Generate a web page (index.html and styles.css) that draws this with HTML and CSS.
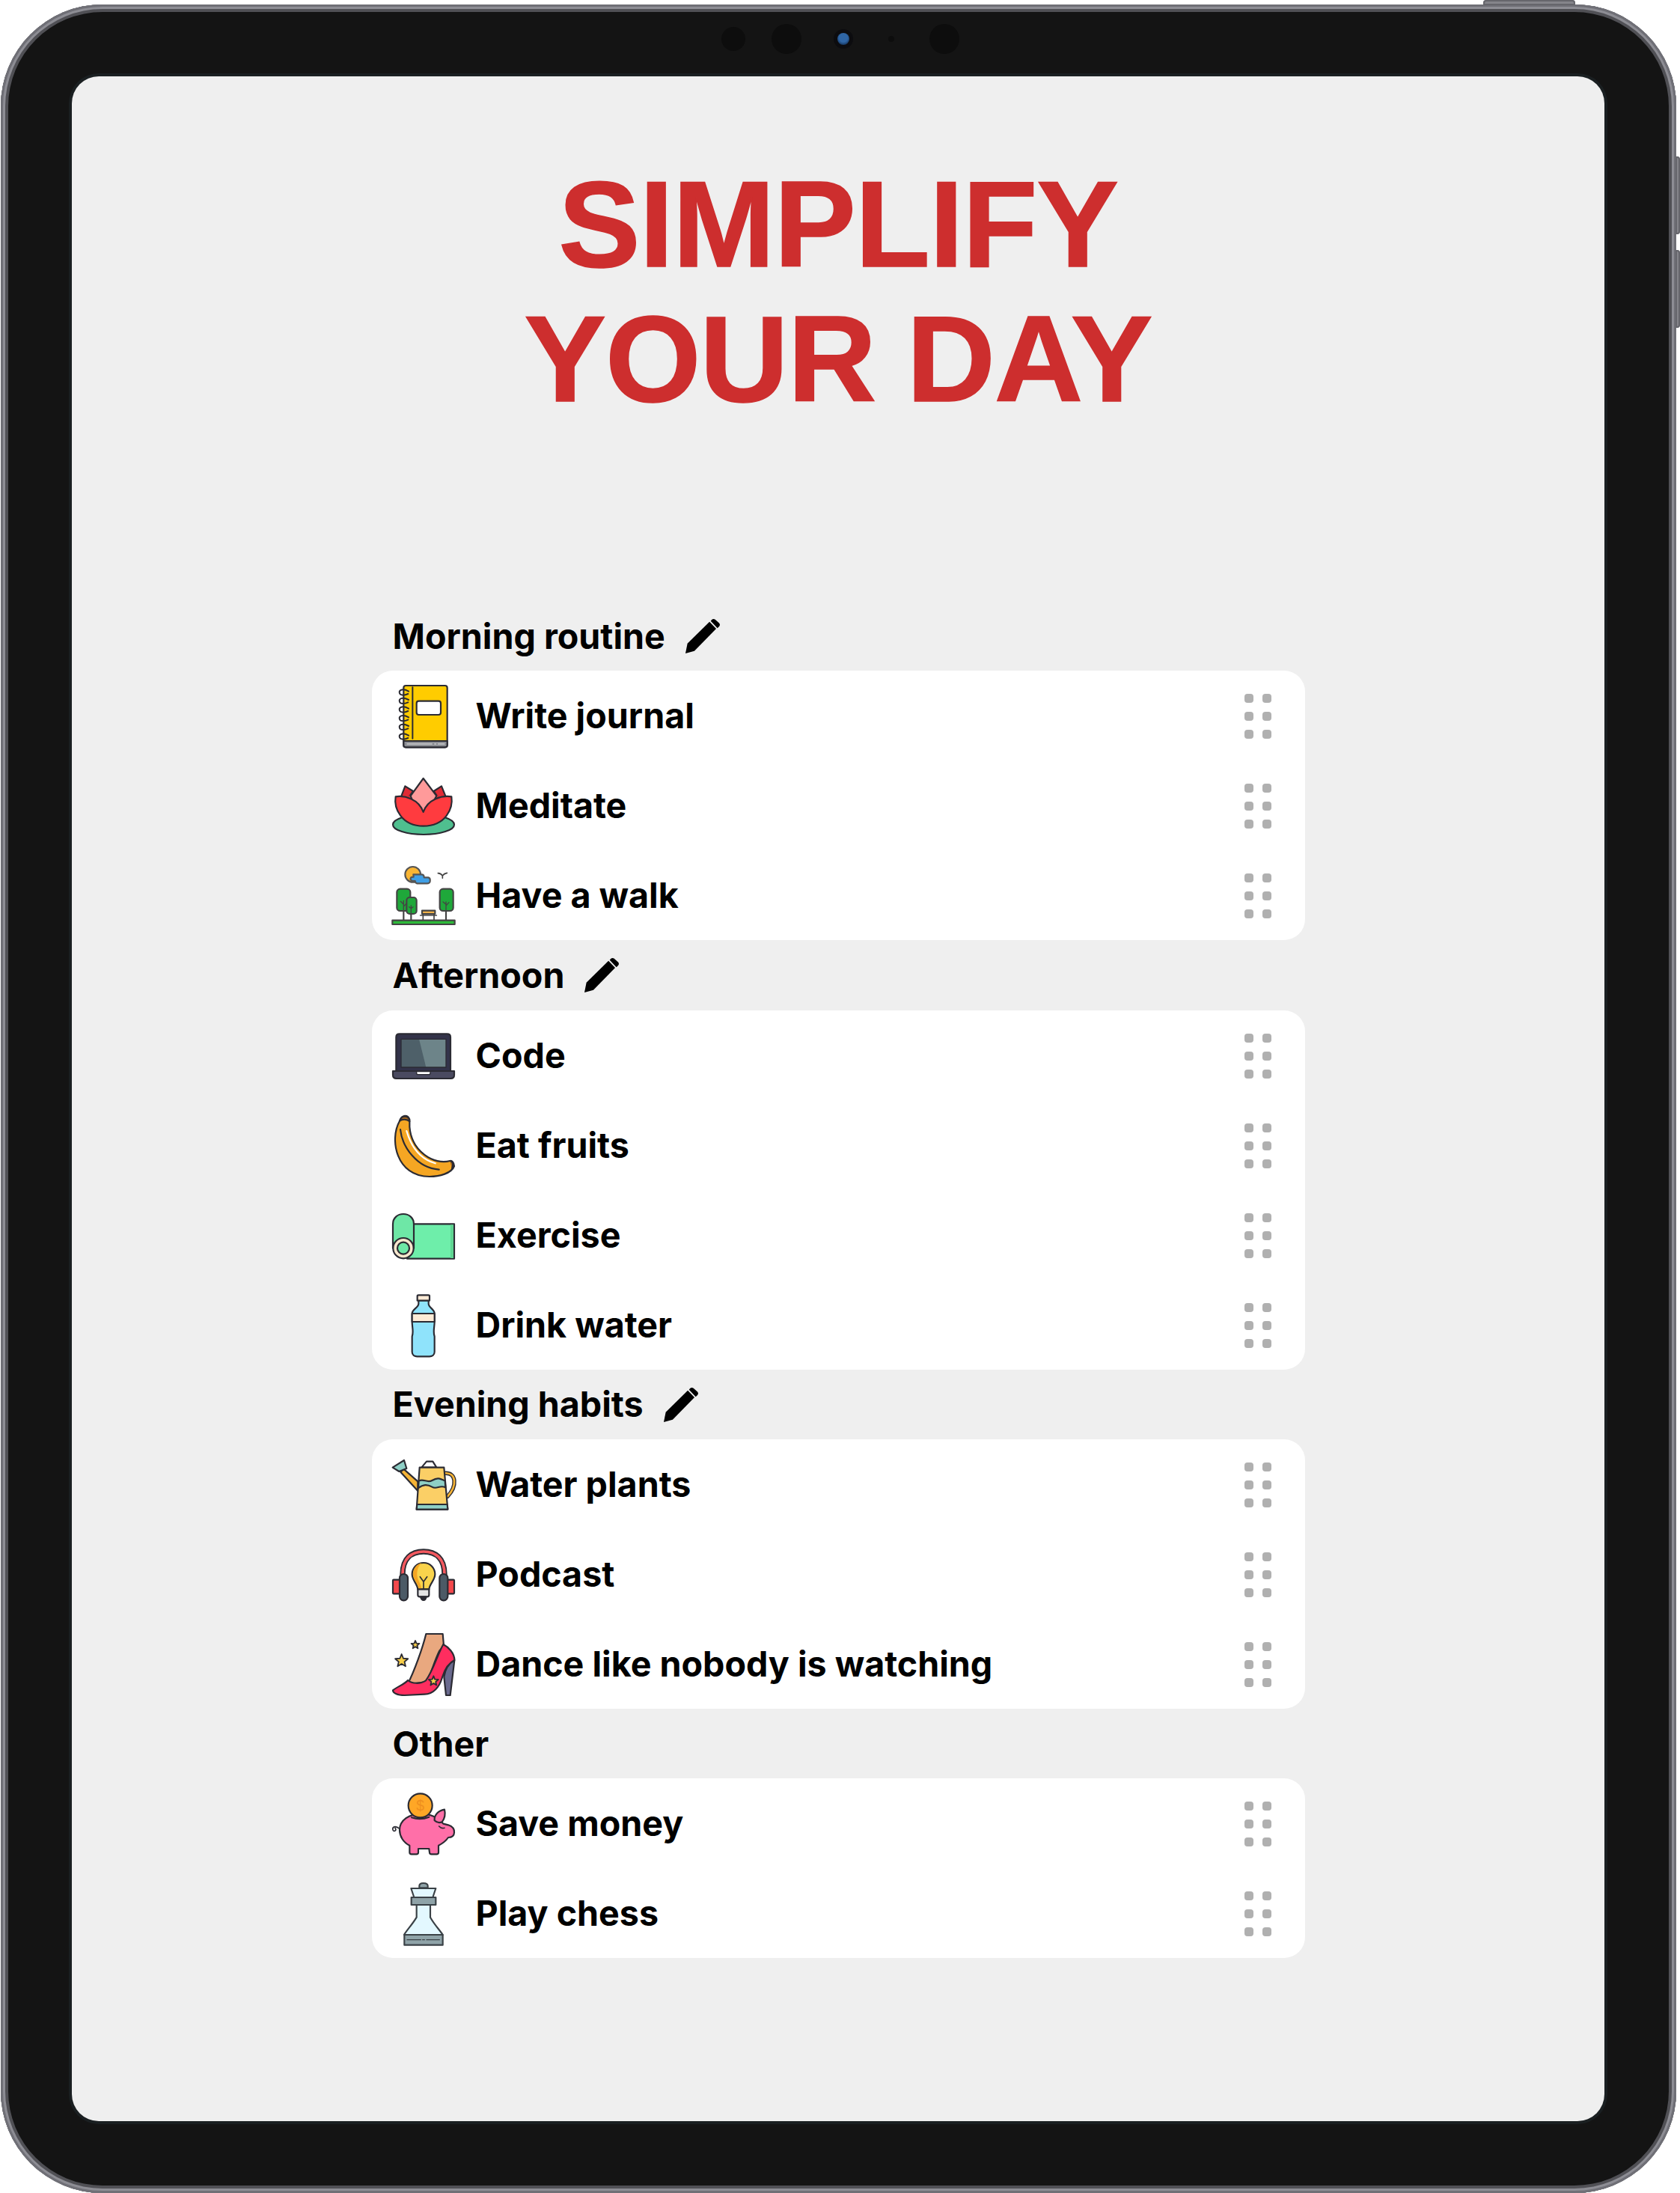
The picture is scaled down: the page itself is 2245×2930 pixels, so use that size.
FILE: index.html
```html
<!DOCTYPE html>
<html lang="en">
<head>
<meta charset="utf-8">
<title>Simplify your day</title>
<link rel="stylesheet" href="styles.css">
</head>
<body>
<svg class="defs" aria-hidden="true"><defs>
<polygon id="star" points="0,-1 .26,-.36 .95,-.31 .43,.14 .59,.81 0,.45 -.59,.81 -.43,.14 -.95,-.31 -.26,-.36"/>
<g id="pencil"><path d="M8 102 97 14 124 42 36 132 0 142Z"/><path d="M106 6Q113 0 120 5L136 20Q142 27 136 33L129 40 102 11Z"/></g>
<g id="grip"><rect x="0" y="0" width="12" height="12" rx="4"/><rect x="24" y="0" width="12" height="12" rx="4"/><rect x="0" y="24" width="12" height="12" rx="4"/><rect x="24" y="24" width="12" height="12" rx="4"/><rect x="0" y="48" width="12" height="12" rx="4"/><rect x="24" y="48" width="12" height="12" rx="4"/></g>
</defs></svg>
<div class="device">
  <span class="btn btn-top"></span>
  <span class="btn btn-side btn-a"></span>
  <span class="btn btn-side btn-b"></span>
  <span class="sensor s1"></span>
  <span class="sensor s2"></span>
  <span class="sensor lens"></span>
  <span class="sensor s4"></span>
  <span class="sensor s5"></span>
  <main class="screen">
    <h1 class="title">SIMPLIFY<br>YOUR DAY</h1>
    <div class="groups">

      <h2 class="group-title">Morning routine <svg class="pen" viewBox="0 0 142 142"><use href="#pencil"/></svg></h2>
      <ul class="card">
        <li class="row">
          <svg class="ic" viewBox="0 0 252 252">
            <rect x="46" y="3" width="175" height="247" rx="9" fill="#ffcc00"/>
            <path d="M46 225H221V242Q221 250 212 250H55Q46 250 46 242Z" fill="#8d8f94"/>
            <path d="M60 237H160M170 237H176M184 237H210" stroke-width="3" stroke="#e8e8e8"/>
            <path d="M82 10V215" stroke-width="6"/>
            <rect x="98" y="65" width="97" height="55" rx="9" fill="#fff"/>
            <g fill="none" stroke-width="6"><path d="M66 26C40 12 26 22 30 34 33 44 52 42 64 36"/><path d="M66 60C40 46 26 56 30 68 33 78 52 76 64 70"/><path d="M66 95C40 81 26 91 30 103 33 113 52 111 64 105"/><path d="M66 130C40 116 26 126 30 138 33 148 52 146 64 140"/><path d="M66 165C40 151 26 161 30 173 33 183 52 181 64 175"/><path d="M66 203C40 189 26 199 30 211 33 221 52 219 64 213"/></g>
          </svg>
          <span class="label">Write journal</span>
          <svg class="grip" viewBox="0 0 36 60"><use href="#grip"/></svg>
        </li>
        <li class="row">
          <svg class="ic" viewBox="0 0 252 252">
            <ellipse cx="126" cy="200" rx="123" ry="40" fill="#4fbf8f"/>
            <path d="M36 88 52 46 84 66 60 100Z" fill="#e02b35"/>
            <path d="M215 88 198 46 167 66 190 100Z" fill="#e02b35"/>
            <path d="M50 95 80 78H172L205 95 125 160Z" fill="#e02b35" stroke="none"/>
            <path d="M125 15 74 85 80 100 125 150 170 100 178 85Z" fill="#ff9a9a"/>
            <path d="M14 88C50 82 108 98 125 150 142 98 200 82 238 88 245 135 215 206 125 206 38 206 6 135 14 88Z" fill="#ff3b3f"/>
          </svg>
          <span class="label">Meditate</span>
          <svg class="grip" viewBox="0 0 36 60"><use href="#grip"/></svg>
        </li>
        <li class="row">
          <svg class="ic" viewBox="0 0 252 252">
            <circle cx="83" cy="40" r="31" fill="#f9b533" stroke="#555"/>
            <path d="M85 40H118Q128 40 128 52H145Q154 54 152 68 150 76 140 76H100Q92 74 92 66H80Q72 62 74 55 76 50 86 50Z" fill="#3f9fe6" stroke="#555"/>
            <path d="M184 35Q196 36 202 45 208 36 220 34M202 45V55" fill="none" stroke="#444" stroke-width="5"/>
            <g stroke="#444">
            <path d="M46 185V222M76 190V222M216 185V222" fill="none"/>
            <rect x="19" y="98" width="54" height="88" rx="13" fill="#1fa83a"/>
            <rect x="58" y="132" width="40" height="66" rx="12" fill="#1fa83a"/>
            <rect x="191" y="98" width="54" height="88" rx="13" fill="#1fa83a"/>
            <path d="M46 185V145M46 160 34 148M46 168 58 156M76 198V165M76 176 68 170M76 176 84 170M216 185V150M216 160 204 150M216 165 228 152" fill="none" stroke-width="4"/>
            <path d="M120 185H172V198H120Z" fill="#f0b24a"/>
            <path d="M113 204H178M124 198V222M168 198V222" fill="none" stroke-width="5"/>
            <rect x="1" y="224" width="250" height="16" fill="#2dbb3a"/>
            </g>
          </svg>
          <span class="label">Have a walk</span>
          <svg class="grip" viewBox="0 0 36 60"><use href="#grip"/></svg>
        </li>
      </ul>

      <h2 class="group-title">Afternoon <svg class="pen" viewBox="0 0 142 142"><use href="#pencil"/></svg></h2>
      <ul class="card">
        <li class="row">
          <svg class="ic" viewBox="0 0 252 252">
            <path d="M16 186V50Q16 37 30 37H220Q234 37 234 50V186Z" fill="#33334a"/>
            <rect x="36" y="58" width="180" height="113" fill="#4e6069" stroke="none"/>
            <path d="M108 58H216V171H136Z" fill="#6d8489" stroke="none"/>
            <path d="M36 58H216V171H36Z" fill="none" stroke-width="4"/>
            <path d="M3 186H249V202Q249 216 235 216H17Q3 216 3 202Z" fill="#4a4a60"/>
            <path d="M98 188H153V194Q153 200 147 200H104Q98 200 98 194Z" fill="#fff" stroke-width="4"/>
          </svg>
          <span class="label">Code</span>
          <svg class="grip" viewBox="0 0 36 60"><use href="#grip"/></svg>
        </li>
        <li class="row">
          <svg class="ic" viewBox="0 0 252 252">
            <path d="M30 26C-12 100 16 249 150 249 190 249 238 236 249 207 248 192 240 184 232 186 170 204 78 150 70 50L70 20C62 0 40 0 30 26Z" fill="#f5a623"/>
            <path d="M30 26C40 18 60 18 70 28 70 6 40-2 30 26Z" fill="#a5661d"/>
            <path d="M232 186C246 190 246 200 240 218" fill="#a5661d"/>
            <path d="M33 60C40 130 100 215 188 221" fill="none"/>
            <path d="M58 66C75 125 110 178 173 196" fill="none" stroke="#fff"/>
          </svg>
          <span class="label">Eat fruits</span>
          <svg class="grip" viewBox="0 0 36 60"><use href="#grip"/></svg>
        </li>
        <li class="row">
          <svg class="ic" viewBox="0 0 252 252">
            <rect x="60" y="79" width="189" height="139" fill="#6eeeaa"/>
            <path d="M234 82H246V216H234Z" fill="#5fd592" stroke="none"/>
            <path d="M3 176V80C3 54 22 39 45 39 68 39 87 54 87 80V176Z" fill="#6ee7a6"/>
            <circle cx="45" cy="176" r="41" fill="#f7e7cd"/>
            <circle cx="45" cy="176" r="24" fill="#6ee7a6"/>
          </svg>
          <span class="label">Exercise</span>
          <svg class="grip" viewBox="0 0 36 60"><use href="#grip"/></svg>
        </li>
        <li class="row">
          <svg class="ic" viewBox="0 0 252 252">
            <path d="M106 26H146V38C146 55 170 60 170 78V111C170 135 163 150 170 170V232C170 245 160 250 150 250H100C90 250 80 245 80 232V170C87 150 80 135 80 111V78C80 60 106 55 106 38Z" fill="#8fe3fb"/>
            <path d="M80 78H170V111H80Z" fill="#fdebd6"/>
            <path d="M101 8Q101 4 106 4H145Q150 4 150 8V26H101Z" fill="#fdebd6"/>
          </svg>
          <span class="label">Drink water</span>
          <svg class="grip" viewBox="0 0 36 60"><use href="#grip"/></svg>
        </li>
      </ul>

      <h2 class="group-title">Evening habits <svg class="pen" viewBox="0 0 142 142"><use href="#pencil"/></svg></h2>
      <ul class="card">
        <li class="row">
          <svg class="ic" viewBox="0 0 252 252">
            <path d="M46 62 103 112V150L34 74Z" fill="#f5b335"/>
            <path d="M2 56 48 27 58 60 28 72Z" fill="#8ecfc6"/>
            <path d="M210 79C258 74 262 130 222 172" fill="none" stroke-width="16"/>
            <path d="M210 79C258 74 262 130 222 172" fill="none" stroke="#f5b335" stroke-width="8"/>
            <path d="M118 56 138 32H163L178 56Z" fill="#fff"/>
            <path d="M110 56H208L223 224H98Z" fill="#fbcf66"/>
            <path d="M107 110C125 98 140 120 160 108S190 98 212 110L214 136C190 124 180 146 160 134S125 124 105 138Z" fill="#8ecfc6"/>
            <path d="M100 204H221L223 224H98Z" fill="#8ecfc6"/>
          </svg>
          <span class="label">Water plants</span>
          <svg class="grip" viewBox="0 0 36 60"><use href="#grip"/></svg>
        </li>
        <li class="row">
          <svg class="ic" viewBox="0 0 252 252">
            <path d="M42 124C42 60 78 33 126 33 174 33 210 60 210 124" fill="none" stroke-width="22"/>
            <path d="M42 124C42 60 78 33 126 33 174 33 210 60 210 124" fill="none" stroke="#f4595f" stroke-width="11"/>
            <rect x="3" y="146" width="30" height="56" rx="3" fill="#f4484c"/>
            <rect x="219" y="146" width="30" height="56" rx="3" fill="#f4484c"/>
            <rect x="30" y="123" width="33" height="106" rx="16" fill="#4c5a66"/>
            <rect x="190" y="123" width="33" height="106" rx="16" fill="#4c5a66"/>
            <path d="M126 78C98 78 80 100 80 124 80 148 100 160 103 184H148C151 160 172 148 172 124 172 100 154 78 126 78Z" fill="#f9d34c"/>
            <path d="M118 79C98 84 84 100 84 124 84 146 104 158 107 182H118C114 158 100 146 100 124 100 104 106 90 118 79Z" fill="#f5a623" stroke="none"/>
            <path d="M126 182V154M112 134 126 154 140 134" fill="none" stroke-width="5"/>
            <path d="M103 184H148V206Q148 214 140 214H111Q103 214 103 206Z" fill="#e4e4e4"/>
            <path d="M114 214H137Q134 228 126 228 118 228 114 214Z" fill="#2b2b33"/>
          </svg>
          <span class="label">Podcast</span>
          <svg class="grip" viewBox="0 0 36 60"><use href="#grip"/></svg>
        </li>
        <li class="row">
          <svg class="ic" viewBox="0 0 252 252">
            <path d="M136 3H203L207 50 190 70C170 110 160 150 140 195L62 205C90 150 122 60 136 3Z" fill="#e9a87f"/>
            <path d="M250 108C225 122 212 148 208 175L216 249H233Z" fill="#6a6a8e"/>
            <path d="M3 229C20 215 50 205 63 189 80 203 112 205 135 190 165 150 180 90 205 45 225 55 250 80 250 108 215 125 205 165 200 180 190 215 165 245 130 245L50 249C20 249 3 240 3 229Z" fill="#ff2d5f"/>
            <use href="#star" transform="translate(93 47) scale(17)" fill="#f9cf4a" stroke-width=".33"/>
            <use href="#star" transform="translate(38 111) scale(27)" fill="#f9cf4a" stroke-width=".2"/>
            <use href="#star" transform="translate(166 192) scale(20)" fill="#f9cf4a" stroke-width=".28"/>
          </svg>
          <span class="label">Dance like nobody is watching</span>
          <svg class="grip" viewBox="0 0 36 60"><use href="#grip"/></svg>
        </li>
      </ul>

      <h2 class="group-title">Other</h2>
      <ul class="card">
        <li class="row">
          <svg class="ic" viewBox="0 0 252 252">
            <path d="M30 145C12 130 0 138 3 150 8 160 20 150 12 142" fill="none" stroke-width="5"/>
            <path d="M30 150C30 110 70 85 115 85 150 85 180 95 205 125L225 130C240 135 250 145 249 160 248 175 240 180 225 180 215 195 200 205 186 212V240Q186 247 178 247H158Q150 247 150 240L148 225H105V240Q105 247 97 247H78Q70 247 70 240V212C45 200 30 175 30 150Z" fill="#ff6fa8"/>
            <path d="M170 112C168 90 185 72 210 68 214 85 210 105 200 118 190 122 178 120 170 112Z" fill="#ff6fa8"/>
            <path d="M188 135Q198 146 210 142" fill="none" stroke-width="5"/>
            <circle cx="113" cy="52" r="48" fill="#ffa726"/>
            <text class="coin" x="113" y="72">$</text>
            <path d="M78 100Q113 112 148 98" fill="none"/>
          </svg>
          <span class="label">Save money</span>
          <svg class="grip" viewBox="0 0 36 60"><use href="#grip"/></svg>
        </li>
        <li class="row">
          <svg class="ic" viewBox="0 0 252 252">
            <g stroke="#3a4146">
            <path d="M109 22V14Q109 3 125 3 143 3 143 14V22Z" fill="#8fa3a8"/>
            <path d="M76 24H175L163 60H88Z" fill="#e3f8ff"/>
            <rect x="77" y="60" width="98" height="30" fill="#8fa3a8"/>
            <path d="M98 90H153V140C170 170 190 190 203 210H48C60 190 80 170 98 140Z" fill="#e3f8ff"/>
            <rect x="49" y="210" width="154" height="41" fill="#8fa3a8"/>
            <path d="M60 230H115M122 230H130M138 230H190" fill="none" stroke-width="4"/>
            </g>
          </svg>
          <span class="label">Play chess</span>
          <svg class="grip" viewBox="0 0 36 60"><use href="#grip"/></svg>
        </li>
      </ul>
    </div>
  </main>
</div>
</body>
</html>
```

FILE: styles.css
```css
html, body {
  margin: 0;
  padding: 0;
  background: #fff;
}
.defs {
  display: block;
  width: 0;
  height: 0;
  overflow: hidden;
}
.device {
  position: relative;
  box-sizing: border-box;
  width: 2239px;
  height: 2924px;
  margin: 6px 0 0 1px;
  padding: 96px 96px 96px 95px;
  background: #141414;
  border-radius: 136px;
  box-shadow: inset 0 0 0 3px #6f6f76, inset 0 0 0 6px #8d8d94, inset 0 0 0 10px #505055;
}
.btn {
  position: absolute;
  background: #84848a;
  box-shadow: inset 0 0 0 2px #66666c;
}
.btn-top {
  left: 1981px;
  top: -6px;
  width: 123px;
  height: 7px;
  border-radius: 4px 4px 0 0;
}
.btn-side {
  left: 2238px;
  width: 6px;
  height: 104px;
  border-radius: 0 4px 4px 0;
}
.btn-a { top: 203px; }
.btn-b { top: 328px; }
.sensor {
  position: absolute;
  border-radius: 50%;
  background: #0d0d0d;
}
.s1 { left: 963px; top: 30px; width: 32px; height: 32px; }
.s2 { left: 1030px; top: 26px; width: 40px; height: 40px; }
.lens {
  left: 1118px;
  top: 38px;
  width: 16px;
  height: 16px;
  background: radial-gradient(circle at 50% 40%, #2f66a6 0 45%, #173a66 75%);
  box-shadow: 0 0 0 5px #0c0c0f;
}
.s4 { left: 1186px; top: 42px; width: 8px; height: 8px; }
.s5 { left: 1241px; top: 26px; width: 40px; height: 40px; }
.screen {
  box-sizing: border-box;
  width: 2048px;
  height: 2732px;
  background: #efefef;
  border-radius: 36px;
  box-shadow: 0 0 0 4px #1a1f21;
  overflow: hidden;
  display: flex;
  flex-direction: column;
  align-items: center;
}
.title {
  margin: 108px 0 0;
  font-family: "Liberation Sans", Arial, sans-serif;
  font-weight: 700;
  font-size: 164px;
  line-height: 180px;
  color: #cd2e2e;
  text-align: center;
  letter-spacing: -1.1px;
  word-spacing: -3px;
  -webkit-text-stroke: 1.5px #cd2e2e;
}
.groups {
  width: 1247px;
  margin-top: 233px;
}
.group-title {
  box-sizing: border-box;
  height: 93.33px;
  margin: 0;
  padding: 0 0 0 28px;
  display: flex;
  align-items: center;
  gap: 27px;
  font-family: Inter, "Noto Sans", sans-serif;
  font-weight: 700;
  font-size: 46.6px;
  color: #000;
}
.pen {
  width: 47px;
  height: 47px;
  fill: #000;
}
.card {
  list-style: none;
  margin: 0;
  padding: 0;
  background: #fff;
  border-radius: 28px;
}
.row {
  box-sizing: border-box;
  height: 120px;
  padding: 2px 45px 0 27px;
  display: flex;
  align-items: center;
}
.ic {
  flex: none;
  width: 84px;
  height: 84px;
  overflow: visible;
  stroke: #2b2b33;
  stroke-width: 6.5;
  stroke-linejoin: round;
  stroke-linecap: round;
}
.label {
  flex: 1;
  margin-left: 28px;
  padding-bottom: 2px;
  font-family: Inter, "Noto Sans", sans-serif;
  font-weight: 700;
  font-size: 46.6px;
  color: #000;
}
.grip {
  flex: none;
  width: 36px;
  height: 60px;
  fill: #b0b0b0;
}
.coin {
  font-family: "Liberation Sans", Arial, sans-serif;
  font-size: 58px;
  font-weight: 400;
  text-anchor: middle;
  fill: #ef8f1e;
  stroke: none;
}
```
